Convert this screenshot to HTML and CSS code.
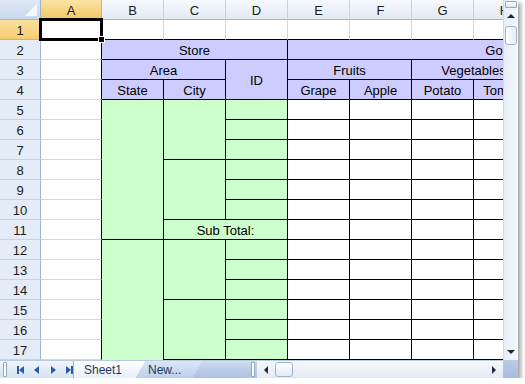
FILE: index.html
```html
<!DOCTYPE html>
<html lang="en">

<head>
    <meta charset="UTF-8" />
    <title>Store Sheet</title>
    <link rel="stylesheet" href="styles.css">
</head>

<body>
    <div class="window">
        <div class="main">
            <div class="sheet">
                <div class="grid" id="grid"></div>
            </div>
            <div class="vscroll">
                <div class="split"></div>
                <div class="vbtn"><span class="arr up"></span></div>
                <div class="vthumb"></div>
                <div class="vfill"></div>
                <div class="vbtn"><span class="arr down"></span></div>
            </div>
        </div>

        <div class="bottom">
            <div class="nav">
                <span class="grip"></span>
                <svg width="8" height="8" viewBox="0 0 8 8"><rect x="0" y="0" width="2" height="8" /><polygon points="7,0 7,8 2,4" /></svg>
                <svg width="8" height="8" viewBox="0 0 8 8"><polygon points="6,0 6,8 1,4" /></svg>
                <svg width="8" height="8" viewBox="0 0 8 8"><polygon points="2,0 2,8 7,4" /></svg>
                <svg width="8" height="8" viewBox="0 0 8 8"><polygon points="1,0 1,8 6,4" /><rect x="6" y="0" width="2" height="8" /></svg>
            </div>
            <div class="tabs">
                <div class="tab active">Sheet1</div>
                <div class="tab new">New...</div>
            </div>
            <div class="tabfill"></div>
            <span class="hgrip"></span>
            <div class="hscroll">
                <div class="hbtn"><span class="arr left"></span></div>
                <div class="hthumb"></div>
                <div class="hfill"></div>
                <div class="hbtn"><span class="arr right"></span></div>
            </div>
            <div class="corner"></div>
        </div>
    </div>

    <script src="script.js"></script>
</body>

</html>
```

FILE: styles.css
```css
body {
    margin: 0;
    background: #ffffff;
    font-family: "Liberation Sans", Arial, sans-serif;
    font-size: 13px;
    color: #000000;
}

.window {
    width: 518px;
    height: 378px;
    display: flex;
    flex-direction: column;
    box-shadow: 3px 3px 4px rgba(0, 0, 0, 0.35);
    background: #ffffff;
}

.main {
    display: flex;
    height: 360px;
}

.sheet {
    width: 503px;
    height: 360px;
    overflow: hidden;
    flex: none;
}

.grid {
    display: grid;
    grid-template-columns: 41px 61px repeat(10, 62px);
    grid-template-rows: repeat(19, 20px);
    width: max-content;
}

.grid > div {
    box-sizing: border-box;
    display: flex;
    align-items: center;
    justify-content: center;
    white-space: nowrap;
    padding-top: 1px;
}

/* headers */
.hcorner {
    background: linear-gradient(#dfe8f5, #c9d9ee);
    border-right: 1px solid #9eb6ce;
    border-bottom: 1px solid #9eb6ce;
    position: relative;
}

.hcorner::after {
    content: "";
    position: absolute;
    right: 3px;
    bottom: 3px;
    border-left: 12px solid transparent;
    border-bottom: 12px solid #ffffff;
    opacity: 0.8;
}

.ch {
    background: linear-gradient(#f6f9fd, #e2eaf5);
    border-right: 1px solid #c5d3e6;
    border-bottom: 1px solid #9eb6ce;
    color: #1b1b1b;
}

.ch.on {
    background: linear-gradient(#fbe3a6, #f4c865);
    border-right-color: #d9b35a;
    border-bottom-color: #c29a4a;
}

.rh {
    background: #e4ecf7;
    border-right: 1px solid #9eb6ce;
    border-bottom: 1px solid #c5d3e6;
    color: #1b1b1b;
}

.rh.on {
    background: linear-gradient(#fbe0a0, #f6cc6e);
    border-bottom-color: #d9b35a;
}

/* ordinary cells */
.c {
    border-right: 1px solid #d0d7e5;
    border-bottom: 1px solid #d0d7e5;
}

.c.bb {
    border-bottom-color: #000000;
}

.c.br {
    border-right-color: #000000;
}

.c.sel-cell {
    position: relative;
}

.sel {
    position: absolute;
    left: -2px;
    top: -2px;
    right: -2px;
    bottom: -2px;
    border: 3px solid #000000;
    pointer-events: none;
}

.sel::after {
    content: "";
    position: absolute;
    right: -5px;
    bottom: -5px;
    width: 5px;
    height: 5px;
    background: #000000;
    border: 1px solid #ffffff;
}

/* table cells */
.t {
    border-right: 1px solid #000000;
    border-bottom: 1px solid #000000;
    background: #ffffff;
}

.t.hd {
    background: #ccccff;
}

.t.gn {
    background: #ccffcc;
}

/* vertical scrollbar */
.vscroll {
    width: 15px;
    height: 360px;
    display: flex;
    flex-direction: column;
    background: linear-gradient(90deg, #e6edf6, #f5f8fc);
    border-left: 1px solid #d0dbe9;
    box-sizing: border-box;
}

.split {
    height: 5px;
    margin: 1px 1px 0;
    border: 1px solid #8fa8c8;
    border-radius: 1px;
    background: linear-gradient(#ffffff, #dbe5f2);
}

.vbtn {
    height: 16px;
    display: flex;
    align-items: center;
    justify-content: center;
}

.vthumb {
    height: 17px;
    margin: 2px 1px 0;
    border: 1px solid #9eb6ce;
    border-radius: 3px;
    background: linear-gradient(90deg, #ffffff, #e3ebf6);
}

.vfill {
    flex: 1;
}

.arr {
    width: 0;
    height: 0;
    border: 4px solid transparent;
}

.arr.up {
    border-bottom: 4px solid #1b2b40;
    border-top-width: 0;
}

.arr.down {
    border-top: 4px solid #1b2b40;
    border-bottom-width: 0;
}

.arr.left {
    border-right: 4px solid #1b2b40;
    border-left-width: 0;
}

.arr.right {
    border-left: 4px solid #1b2b40;
    border-right-width: 0;
}

/* bottom bar */
.bottom {
    height: 18px;
    display: flex;
    background: linear-gradient(#cddbee, #a9c1e2);
    border-top: 1px solid #b8cbe3;
    box-sizing: border-box;
}

.nav {
    width: 74px;
    display: flex;
    align-items: center;
    gap: 8px;
    padding-left: 3px;
    box-sizing: border-box;
    background: linear-gradient(#f0f5fb, #d6e2f2);
    border-right: 1px solid #9eb6ce;
    fill: #2a5aa8;
}

.grip,
.hgrip {
    width: 2px;
    height: 13px;
    border: 1px solid #8fa8c8;
    border-radius: 1px;
    background: #ffffff;
    align-self: center;
    margin-right: 2px;
}

.tabs {
    display: flex;
    height: 17px;
}

.tab {
    height: 17px;
    display: flex;
    align-items: center;
    color: #1e395b;
    font-size: 12px;
    box-sizing: border-box;
}

.tab.active {
    width: 72px;
    padding-left: 10px;
    background: linear-gradient(#ffffff, #e6eef8);
    clip-path: polygon(0 0, 100% 0, 86% 100%, 0 100%);
}

.tab.new {
    width: 66px;
    margin-left: -10px;
    padding-left: 12px;
    background: linear-gradient(#dbe6f5, #bcd0ea);
    clip-path: polygon(14% 0, 100% 0, 86% 100%, 0 100%);
}

.tabfill {
    flex: 1;
}

.hgrip {
    margin: 0 2px 0 0;
}

.hscroll {
    width: 246px;
    display: flex;
    align-items: stretch;
    background: linear-gradient(#f5f8fc, #e4ebf5);
}

.hbtn {
    width: 18px;
    display: flex;
    align-items: center;
    justify-content: center;
}

.hthumb {
    width: 16px;
    margin: 1px 0;
    border: 1px solid #9eb6ce;
    border-radius: 3px;
    background: linear-gradient(#ffffff, #e3ebf6);
}

.hfill {
    flex: 1;
}

.corner {
    width: 15px;
    background: linear-gradient(#b7cbe6, #a4bde0);
}
```

FILE: script.js
```js
const grid = document.getElementById('grid');
const COLS = ['A', 'B', 'C', 'D', 'E', 'F', 'G', 'H', 'I', 'J', 'K'];
const ROWS = 18;

// [row, col, rowSpan, colSpan, text]  (col 1 = A)
const merges = [
    [2, 2, 1, 3, 'Store'],
    [2, 5, 1, 7, 'Goods'],
    [3, 2, 1, 2, 'Area'],
    [3, 4, 2, 1, 'ID'],
    [3, 5, 1, 2, 'Fruits'],
    [3, 7, 1, 2, 'Vegetables'],
    [3, 9, 1, 3, ''],
    [5, 2, 7, 1, ''],
    [5, 3, 3, 1, ''],
    [8, 3, 3, 1, ''],
    [11, 3, 1, 2, 'Sub Total:'],
    [12, 2, 7, 1, ''],
    [12, 3, 3, 1, ''],
    [15, 3, 3, 1, ''],
    [18, 3, 1, 2, 'Sub Total:']
];

const texts = {
    '4,2': 'State',
    '4,3': 'City',
    '4,5': 'Grape',
    '4,6': 'Apple',
    '4,7': 'Potato',
    '4,8': 'Tomato'
};

function addCell(cls, text, r, c, rs, cs) {
    const d = document.createElement('div');
    d.className = cls;
    d.textContent = text || '';
    d.style.gridArea = (r + 1) + ' / ' + (c + 1) + ' / span ' + rs + ' / span ' + cs;
    grid.appendChild(d);
    return d;
}

function findMerge(r, c) {
    return merges.find(m => r >= m[0] && r < m[0] + m[2] && c >= m[1] && c < m[1] + m[3]);
}

for (let r = 0; r <= ROWS; r++) {
    for (let c = 0; c <= COLS.length; c++) {
        if (r === 0 && c === 0) {
            addCell('hcorner', '', r, c, 1, 1);
        } else if (r === 0) {
            addCell(c === 1 ? 'ch on' : 'ch', COLS[c - 1], r, c, 1, 1);
        } else if (c === 0) {
            addCell(r === 1 ? 'rh on' : 'rh', r, r, c, 1, 1);
        } else if (r >= 2 && c >= 2) {
            const m = findMerge(r, c);
            if (m && (m[0] !== r || m[1] !== c)) continue;
            let cls = 't';
            if (r <= 4) cls += ' hd';
            else if (c <= 4) cls += ' gn';
            if (m) addCell(cls, m[4], r, c, m[2], m[3]);
            else addCell(cls, texts[r + ',' + c], r, c, 1, 1);
        } else {
            let cls = 'c';
            if (r === 1 && c >= 2) cls += ' bb';
            if (c === 1 && r >= 2) cls += ' br';
            const d = addCell(cls, '', r, c, 1, 1);
            if (r === 1 && c === 1) {
                d.classList.add('sel-cell');
                const s = document.createElement('div');
                s.className = 'sel';
                d.appendChild(s);
            }
        }
    }
}
```
